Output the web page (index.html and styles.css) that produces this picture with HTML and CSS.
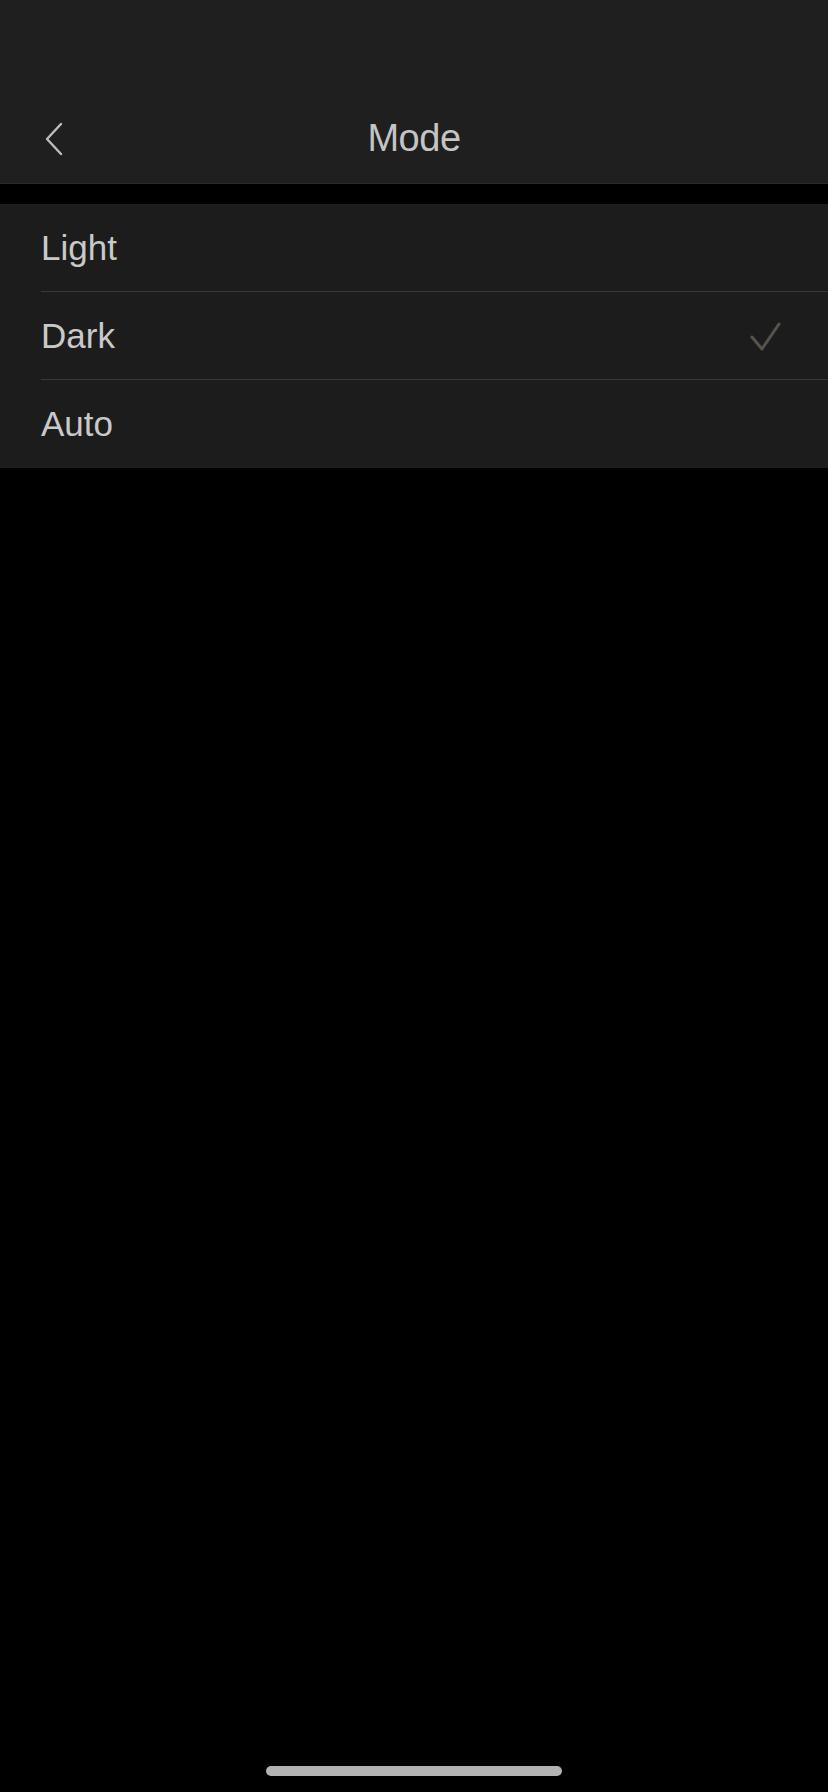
FILE: index.html
```html
<!DOCTYPE html>
<html lang="en">

<head>
  <meta charset="UTF-8">
  <meta name="viewport" content="width=device-width, initial-scale=1">
  <title>Mode</title>
  <link rel="stylesheet" href="styles.css">
</head>

<body>
  <header class="top-bar">
    <div class="status-space"></div>
    <nav class="nav-bar">
      <button class="back-btn" aria-label="Back">
        <svg width="20" height="34" viewBox="0 0 20 34">
          <path d="M17 2 L3 17 L17 32" fill="none" stroke="#bdbdbd" stroke-width="2.4" stroke-linecap="round" stroke-linejoin="round"/>
        </svg>
      </button>
      <h1 class="title">Mode</h1>
    </nav>
  </header>

  <ul class="mode-list">
    <li class="mode-item">
      <span>Light</span>
    </li>
    <li class="mode-item">
      <span>Dark</span>
      <svg class="check" width="34" height="34" viewBox="0 0 34 34">
        <path d="M4 17 L14 29 L31 4" fill="none" stroke="#58534a" stroke-width="3" stroke-linecap="round" stroke-linejoin="round"/>
      </svg>
    </li>
    <li class="mode-item">
      <span>Auto</span>
    </li>
  </ul>

  <div class="home-indicator"></div>
</body>

</html>
```

FILE: styles.css
```css
html, body {
  margin: 0;
  padding: 0;
  background-color: #000;
}

body {
  font-family: "Liberation Sans", Arial, sans-serif;
  color: #c9c9c9;
  width: 828px;
  height: 1792px;
  position: relative;
  overflow: hidden;
}

.top-bar {
  background-color: #1f1f1f;
  border-bottom: 1px solid #2b2b2b;
}

.status-space {
  height: 94px;
}

.nav-bar {
  height: 89px;
  display: flex;
  align-items: center;
  justify-content: center;
  position: relative;
}

.back-btn {
  position: absolute;
  left: 44px;
  top: 28px;
  background: none;
  border: none;
  padding: 0;
  display: flex;
}

.title {
  margin: 0;
  font-size: 38px;
  font-weight: normal;
  color: #c4c4c4;
  letter-spacing: -0.5px;
}

.mode-list {
  list-style: none;
  margin: 20px 0 0 0;
  padding: 0 0 0 41px;
  background-color: #1c1c1c;
}

.mode-item {
  height: 87px;
  display: flex;
  align-items: center;
  justify-content: space-between;
  padding-right: 46px;
  font-size: 35px;
  color: #c9c9c9;
  border-bottom: 1px solid #393939;
}

.mode-item:last-child {
  height: 88px;
  border-bottom: none;
}

.check {
  margin-top: 2px;
}

.home-indicator {
  position: absolute;
  left: 266px;
  top: 1766px;
  width: 296px;
  height: 10px;
  border-radius: 5px;
  background-color: #b3b3b3;
}
```
